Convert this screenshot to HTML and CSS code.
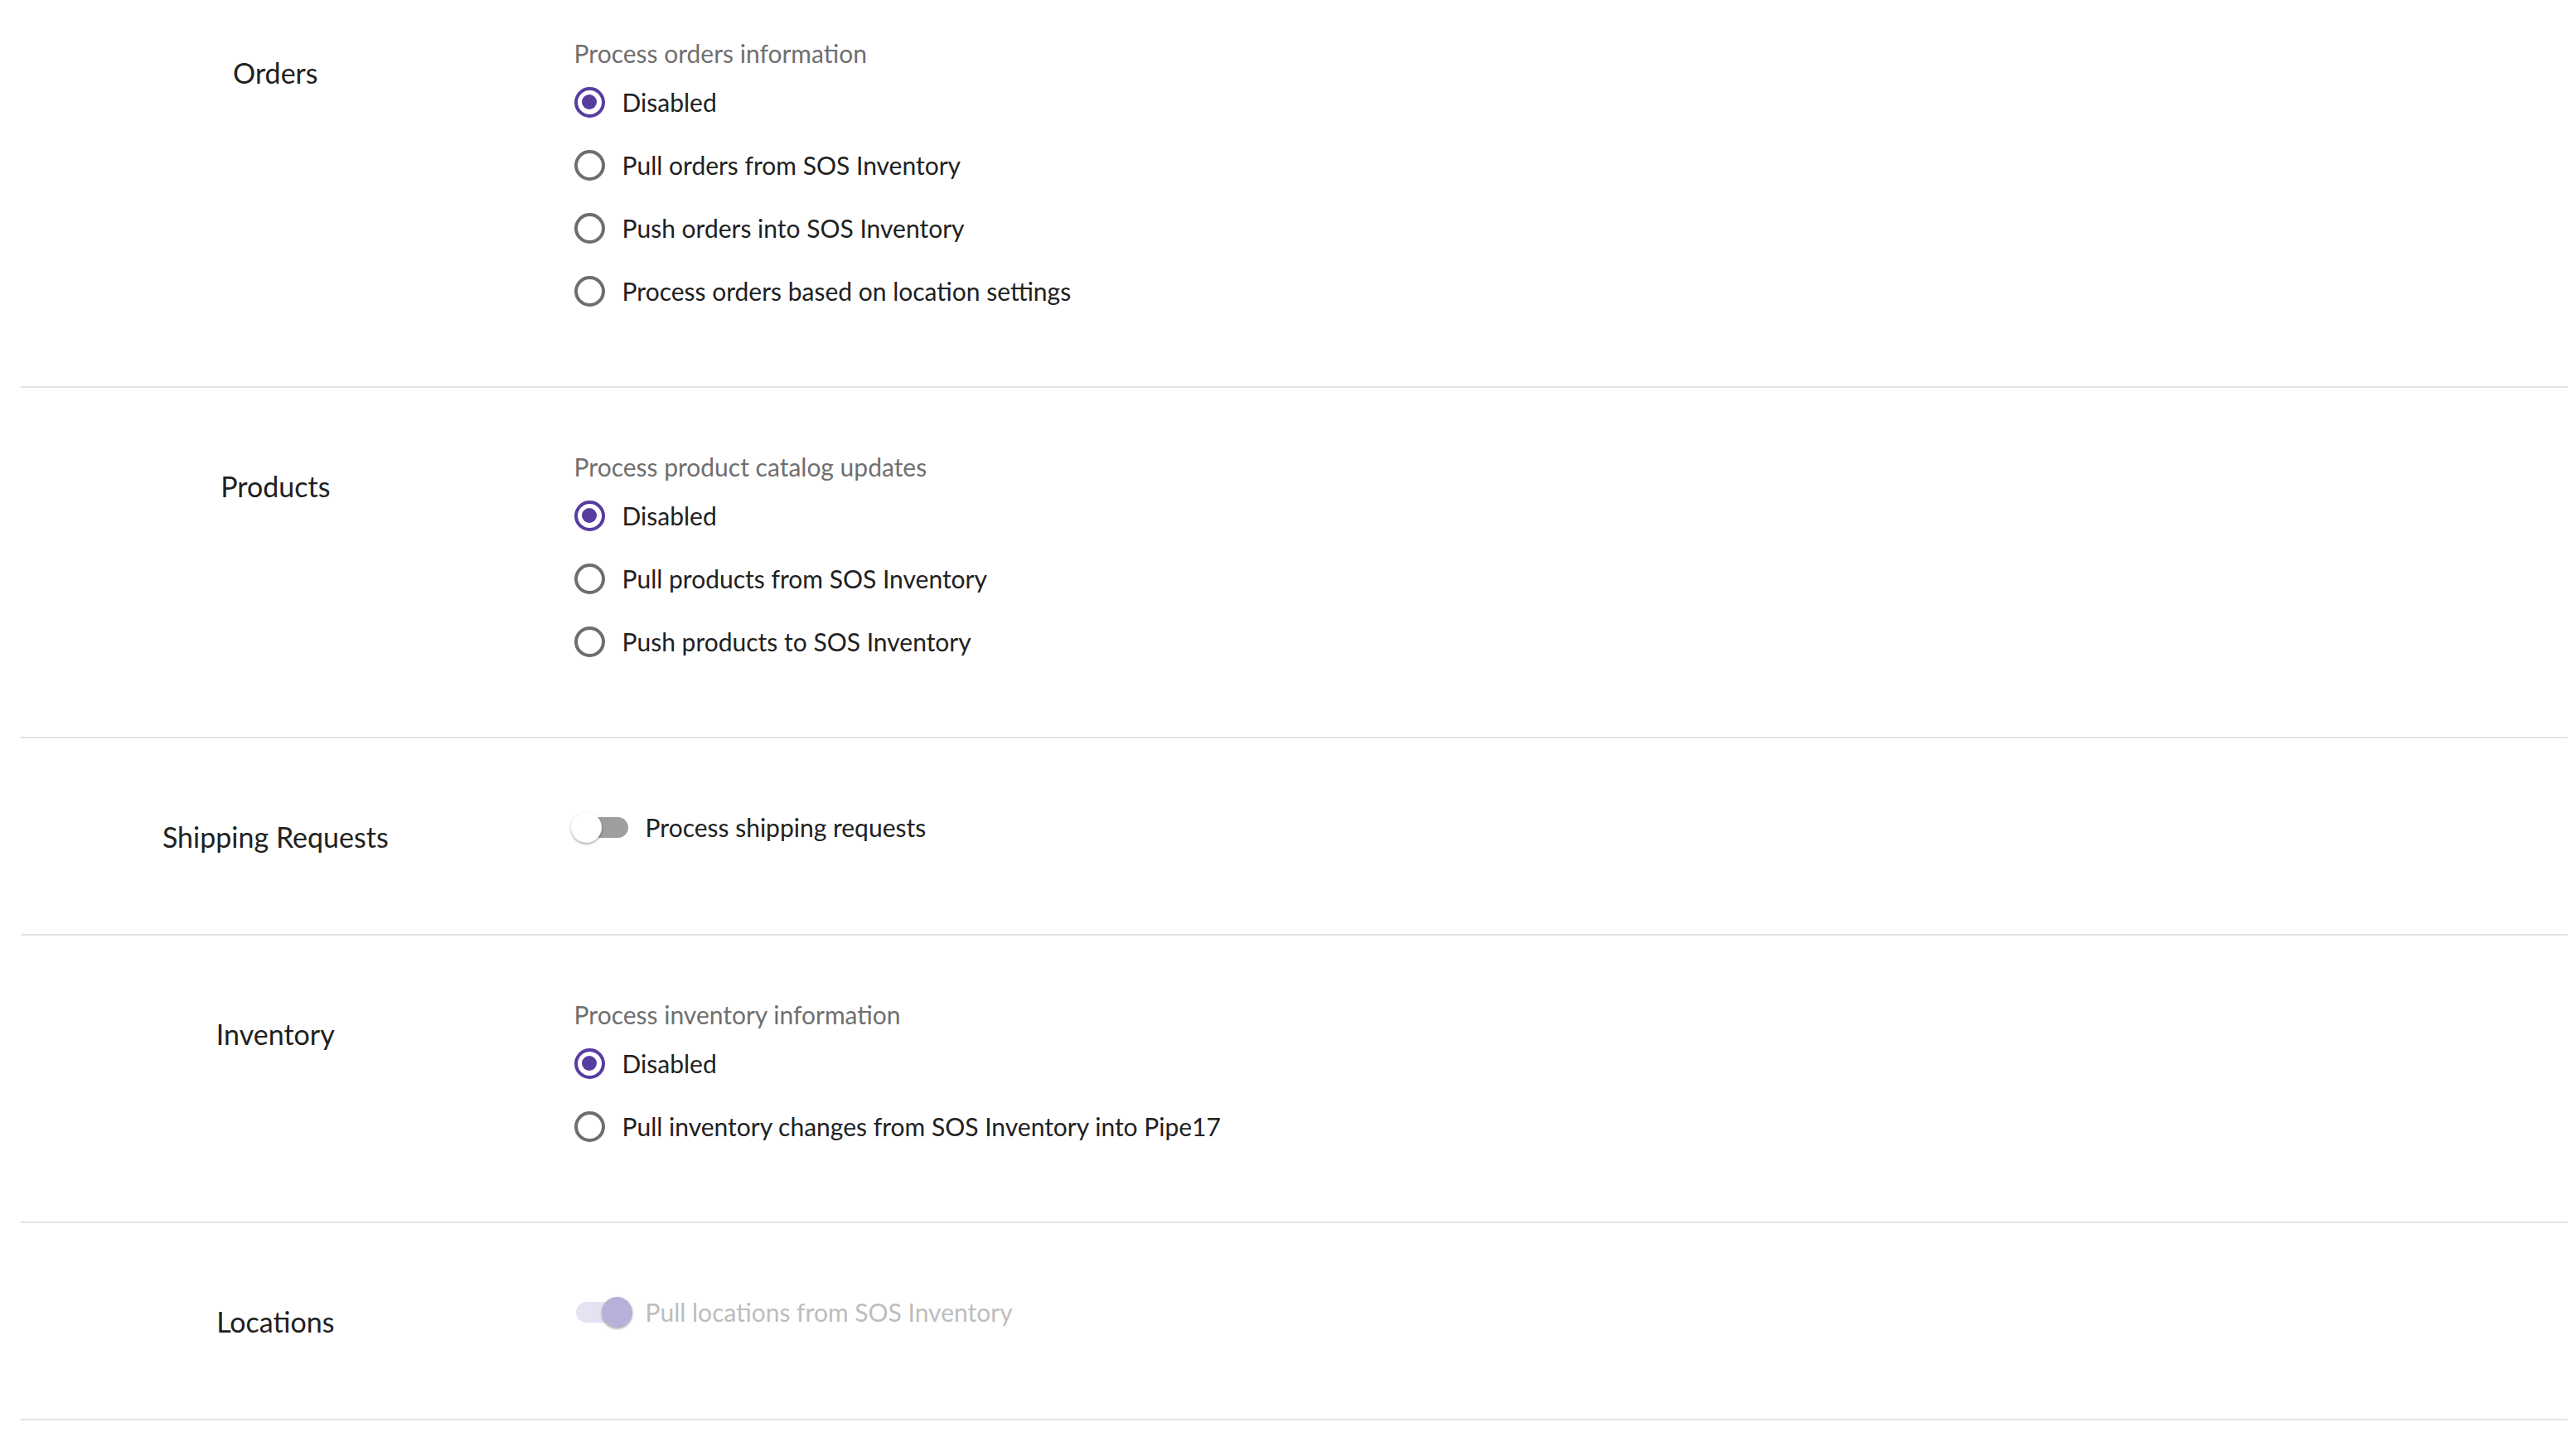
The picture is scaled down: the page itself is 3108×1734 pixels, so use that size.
FILE: index.html
```html
<!DOCTYPE html>
<html lang="en">
<head>
    <meta charset="UTF-8">
    <meta name="viewport" content="width=device-width, initial-scale=1.0">
    <title>SOS Inventory settings</title>
    <link rel="stylesheet" href="styles.css">
</head>
<body>
    <div class="settings">

        <section class="setting first">
            <div class="setting-label">Orders</div>
            <div class="setting-body">
                <div class="setting-hint">Process orders information</div>
                <label class="radio-row"><input type="radio" name="orders" checked> Disabled</label>
                <label class="radio-row"><input type="radio" name="orders"> Pull orders from SOS Inventory</label>
                <label class="radio-row"><input type="radio" name="orders"> Push orders into SOS Inventory</label>
                <label class="radio-row"><input type="radio" name="orders"> Process orders based on location settings</label>
            </div>
        </section>

        <section class="setting">
            <div class="setting-label">Products</div>
            <div class="setting-body">
                <div class="setting-hint">Process product catalog updates</div>
                <label class="radio-row"><input type="radio" name="products" checked> Disabled</label>
                <label class="radio-row"><input type="radio" name="products"> Pull products from SOS Inventory</label>
                <label class="radio-row"><input type="radio" name="products"> Push products to SOS Inventory</label>
            </div>
        </section>

        <section class="setting">
            <div class="setting-label">Shipping Requests</div>
            <div class="setting-body">
                <label class="switch-row">
                    <span class="switch"><span class="switch-track"></span><span class="switch-thumb"></span></span>
                    Process shipping requests
                </label>
            </div>
        </section>

        <section class="setting">
            <div class="setting-label">Inventory</div>
            <div class="setting-body">
                <div class="setting-hint">Process inventory information</div>
                <label class="radio-row"><input type="radio" name="inventory" checked> Disabled</label>
                <label class="radio-row"><input type="radio" name="inventory"> Pull inventory changes from SOS Inventory into Pipe17</label>
            </div>
        </section>

        <section class="setting">
            <div class="setting-label">Locations</div>
            <div class="setting-body">
                <label class="switch-row disabled">
                    <span class="switch on"><span class="switch-track"></span><span class="switch-thumb"></span></span>
                    Pull locations from SOS Inventory
                </label>
            </div>
        </section>

    </div>
</body>
</html>
```

FILE: styles.css
```css
body {
    margin: 0;
    font-family: 'Lato', 'Noto Sans', sans-serif;
    background-color: #fff;
    color: #212121;
}
.settings {
    margin: 0 10px 0 25px;
}
.setting {
    display: grid;
    grid-template-columns: 20% 1fr;
    padding: 74px 0 77px;
    border-bottom: 2px solid #e3e3e3;
}
.setting.first {
    padding-top: 43px;
}
.setting-label {
    text-align: center;
    font-size: 34px;
    line-height: 48px;
    padding: 21px 0 16px;
}
.setting-body {
    padding-left: 53px;
}
.setting-hint {
    font-size: 30px;
    line-height: 42px;
    color: #6f6f6f;
}
.radio-row {
    display: flex;
    align-items: center;
    gap: 21px;
    height: 76px;
    font-size: 30px;
    cursor: pointer;
}
.radio-row input {
    appearance: none;
    margin: 0;
    width: 37px;
    height: 37px;
    border: 4px solid #6e6e6e;
    border-radius: 50%;
    display: grid;
    place-items: center;
    flex-shrink: 0;
    cursor: pointer;
}
.radio-row input:checked {
    border-color: #583ca0;
}
.radio-row input:checked::after {
    content: "";
    width: 18px;
    height: 18px;
    border-radius: 50%;
    background-color: #583ca0;
}
.switch-row {
    display: flex;
    align-items: center;
    gap: 16px;
    height: 66px;
    font-size: 30px;
    margin-left: -4px;
    cursor: pointer;
}
.switch {
    position: relative;
    width: 74px;
    height: 37px;
    flex-shrink: 0;
}
.switch-track {
    position: absolute;
    left: 6px;
    top: 6px;
    width: 63px;
    height: 25px;
    border-radius: 13px;
    background-color: #9e9e9e;
}
.switch-thumb {
    position: absolute;
    left: 0;
    top: 0;
    width: 37px;
    height: 37px;
    border-radius: 50%;
    background-color: #fff;
    box-shadow: 0 2px 2px rgba(0, 0, 0, 0.2), 0 1px 4px rgba(0, 0, 0, 0.14);
}
.switch.on .switch-track {
    background-color: #e6e2f3;
}
.switch.on .switch-thumb {
    left: 37px;
    background-color: #b9b0d9;
}
.switch-row.disabled {
    color: #bdbdbd;
    cursor: default;
}
```
